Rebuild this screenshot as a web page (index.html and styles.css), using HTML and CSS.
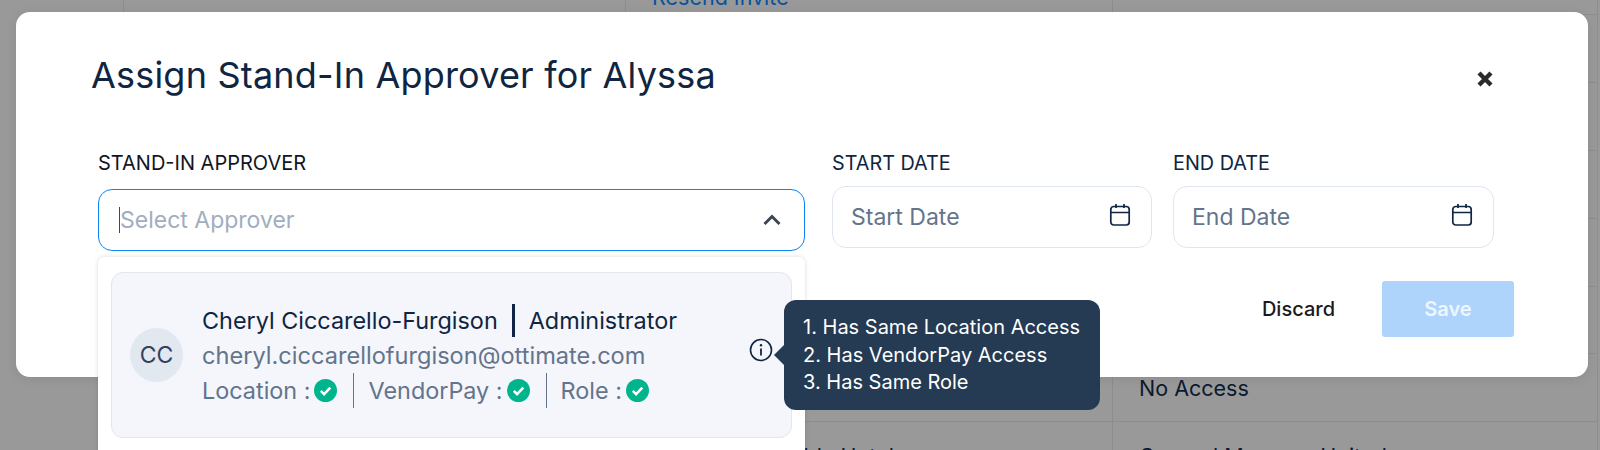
FILE: index.html
```html
<!DOCTYPE html>
<html lang="en">
<head>
  <meta charset="UTF-8">
  <title>Assign Stand-In Approver</title>
  <link rel="stylesheet" href="styles.css">
</head>
<body>
  <!-- table behind the modal -->
  <div class="user-table">
    <div class="table-row first-row">
      <div class="cell"></div>
      <div class="cell"><a class="link">Resend Invite</a></div>
      <div class="cell"></div>
    </div>
    <div class="table-row"><div class="cell"></div><div class="cell"></div><div class="cell"></div></div>
    <div class="table-row"><div class="cell"></div><div class="cell"></div><div class="cell"></div></div>
    <div class="table-row"><div class="cell"></div><div class="cell"></div><div class="cell"></div></div>
    <div class="table-row"><div class="cell"></div><div class="cell"></div><div class="cell"></div></div>
    <div class="table-row"><div class="cell"></div><div class="cell"></div><div class="cell"></div></div>
    <div class="table-row"><div class="cell"></div><div class="cell"></div><div class="cell">No Access</div></div>
    <div class="table-row"><div class="cell"></div><div class="cell">Accounts Payable Hotel</div><div class="cell">General Manager United</div></div>
  </div>

  <div class="modal">
    <div class="modal-header">
      <h2 class="modal-title">Assign Stand-In Approver for Alyssa</h2>
      <svg class="close-icon" width="18" height="18" viewBox="0 0 18 18">
        <path d="M3 3l12 12M15 3l-12 12" fill="none" stroke="#2b2b2b" stroke-width="4.4"/>
      </svg>
    </div>

    <div class="fields">
      <div class="field field-select">
        <label class="field-label">STAND-IN APPROVER</label>
        <div class="select-wrap">
          <div class="select-box">
            <span class="text-caret"></span>
            <span class="select-placeholder">Select Approver</span>
            <svg class="chevron" width="20" height="12" viewBox="0 0 20 12">
              <path d="M2.5 10L10 2.5L17.5 10" fill="none" stroke="#3b4754" stroke-width="3"/>
            </svg>
          </div>

          <div class="dropdown">
            <div class="option-card">
              <div class="avatar">CC</div>
              <div class="option-text">
                <div class="option-name">
                  <span>Cheryl Ciccarello-Furgison</span>
                  <span class="name-divider"></span>
                  <span>Administrator</span>
                </div>
                <div class="option-email">cheryl.ciccarellofurgison@ottimate.com</div>
                <div class="option-status">
                  <span class="status-item">Location :
                    <svg class="check" width="23" height="23" viewBox="0 0 23 23"><circle cx="11.5" cy="11.5" r="11.5" fill="#00b48d"/><path d="M6.8 11.8l3.3 3.3l6.2-6.4" fill="none" stroke="#fff" stroke-width="2.6"/></svg>
                  </span>
                  <span class="status-item">VendorPay :
                    <svg class="check" width="23" height="23" viewBox="0 0 23 23"><circle cx="11.5" cy="11.5" r="11.5" fill="#00b48d"/><path d="M6.8 11.8l3.3 3.3l6.2-6.4" fill="none" stroke="#fff" stroke-width="2.6"/></svg>
                  </span>
                  <span class="status-item">Role :
                    <svg class="check" width="23" height="23" viewBox="0 0 23 23"><circle cx="11.5" cy="11.5" r="11.5" fill="#00b48d"/><path d="M6.8 11.8l3.3 3.3l6.2-6.4" fill="none" stroke="#fff" stroke-width="2.6"/></svg>
                  </span>
                </div>
              </div>
              <div class="info">
                <svg width="24" height="24" viewBox="0 0 24 24">
                  <circle cx="12" cy="12" r="10.5" fill="none" stroke="#0f2542" stroke-width="1.6"/>
                  <path d="M12 10.5v7" stroke="#0f2542" stroke-width="1.8"/>
                  <circle cx="12" cy="7.2" r="1.2" fill="#0f2542"/>
                </svg>
                <div class="tooltip">
                  <div>1. Has Same Location Access</div>
                  <div>2. Has VendorPay Access</div>
                  <div>3. Has Same Role</div>
                </div>
              </div>
            </div>
          </div>
        </div>
      </div>

      <div class="field">
        <label class="field-label">START DATE</label>
        <div class="date-box">
          <span>Start Date</span>
          <svg class="calendar" width="22" height="24" viewBox="0 0 22 24"><rect x="1.8" y="3.5" width="18.4" height="18.5" rx="3" fill="none" stroke="#0f2542" stroke-width="1.7"/><path d="M1.8 9.5h18.4M7 1v4M15 1v4" fill="none" stroke="#0f2542" stroke-width="1.7"/></svg>
        </div>
      </div>

      <div class="field field-end">
        <label class="field-label">END DATE</label>
        <div class="date-box">
          <span>End Date</span>
          <svg class="calendar" width="22" height="24" viewBox="0 0 22 24"><rect x="1.8" y="3.5" width="18.4" height="18.5" rx="3" fill="none" stroke="#0f2542" stroke-width="1.7"/><path d="M1.8 9.5h18.4M7 1v4M15 1v4" fill="none" stroke="#0f2542" stroke-width="1.7"/></svg>
        </div>
      </div>
    </div>

    <div class="modal-footer">
      <button class="btn-discard">Discard</button>
      <button class="btn-save" disabled>Save</button>
    </div>
  </div>
</body>
</html>
```

FILE: styles.css
```css
html, body {
  margin: 0;
  height: 450px;
  overflow: hidden;
}
body {
  position: relative;
  font-family: 'Inter', sans-serif;
  background-color: #999;
  color: #0f2542;
}

/* table behind the modal */
.user-table {
  margin-left: 123px;
  width: 1475px;
  border-left: 1px solid #8d8d8d;
  border-right: 1px solid #8d8d8d;
  box-sizing: border-box;
  color: #0b1a30;
  font-size: 21.5px;
}
.table-row {
  display: grid;
  grid-template-columns: 501px 487px 1fr;
  height: 67.9px;
  box-sizing: border-box;
  border-bottom: 1px solid #8d8d8d;
}
.first-row {
  height: 15px;
  grid-template-rows: 14px;
}
.cell {
  display: flex;
  align-items: center;
  padding-left: 26px;
  border-left: 1px solid #8d8d8d;
  white-space: nowrap;
}
.cell:first-child {
  border-left: none;
}
.first-row .cell {
  align-items: flex-end;
  padding-bottom: 4px;
}
.link {
  color: #07539c;
}

/* modal */
.modal {
  position: absolute;
  top: 12px;
  left: 16px;
  width: 1572px;
  height: 365px;
  box-sizing: border-box;
  padding: 43px 74px 40px 76px;
  background-color: #fff;
  border-radius: 14px;
  box-shadow: 0 2px 12px rgba(0, 0, 0, 0.08);
}
.modal-header {
  display: flex;
  justify-content: space-between;
  align-items: center;
}
.modal-title {
  margin: 0 0 0 -1px;
  font-size: 36px;
  line-height: 40px;
  font-weight: 400;
  letter-spacing: 0.2px;
}
.close-icon {
  margin-top: 8px;
  margin-right: 20px;
}

.fields {
  display: flex;
  gap: 21px;
  margin-top: 57px;
  margin-left: 6px;
}
.field {
  width: 320px;
}
.field-end {
  width: 321px;
}
.field-select {
  width: 707px;
  margin-right: 6px;
}
.field-label {
  display: block;
  margin-bottom: 12px;
  font-size: 19.8px;
  line-height: 22px;
}
.field-select .field-label {
  margin-bottom: 15px;
  font-size: 20px;
  color: #11161f;
}

.select-wrap {
  position: relative;
}
.select-box {
  display: flex;
  align-items: center;
  height: 62px;
  box-sizing: border-box;
  padding: 0 22px 0 20px;
  border: 1px solid #0a84f0;
  border-radius: 14px;
}
.text-caret {
  width: 1px;
  height: 26px;
  background-color: #3a4a5a;
}
.select-placeholder {
  flex: 1;
  font-size: 23px;
  color: #a0aec0;
}
.date-box {
  display: flex;
  align-items: center;
  justify-content: space-between;
  height: 62px;
  box-sizing: border-box;
  padding: 0 20px 0 18px;
  border: 1px solid #dfe6f0;
  border-radius: 14px;
  font-size: 23px;
  color: #64748b;
}
.calendar {
  margin-bottom: 4px;
}

/* dropdown list */
.dropdown {
  position: absolute;
  top: 100%;
  left: 0;
  right: 0;
  margin-top: 6px;
  padding: 15px 13px 30px;
  background-color: #fff;
  border-radius: 6px;
  box-shadow: 0 0 4px rgba(0, 0, 0, 0.15);
}
.option-card {
  display: flex;
  align-items: center;
  height: 166px;
  box-sizing: border-box;
  padding: 0 18px;
  background-color: #f4f6fb;
  border: 1px solid #e3e6ed;
  border-radius: 12px;
}
.avatar {
  display: flex;
  align-items: center;
  justify-content: center;
  flex-shrink: 0;
  width: 53px;
  height: 54px;
  margin-right: 19px;
  border-radius: 50%;
  background-color: #e2e8f0;
  color: #33415c;
  font-size: 23px;
}
.option-text {
  flex: 1;
  font-size: 23.4px;
  line-height: 35px;
}
.option-name {
  display: flex;
  align-items: center;
}
.name-divider {
  width: 3px;
  height: 33px;
  margin: 0 14px 0 14px;
  background-color: #0f2542;
}
.option-email {
  font-size: 23.6px;
  color: #64748b;
}
.option-status {
  display: flex;
  color: #64748b;
}
.status-item {
  display: flex;
  align-items: center;
  gap: 4px;
  padding-right: 16px;
  margin-right: 14px;
  border-right: 1px solid #64748b;
}
.status-item:last-child {
  border-right: none;
}
.check {
  flex-shrink: 0;
}

.info {
  position: relative;
  display: flex;
  margin-bottom: 10px;
}
.tooltip {
  position: absolute;
  top: -38px;
  left: 35px;
  width: 316px;
  height: 110px;
  box-sizing: border-box;
  padding: 14px 19px;
  background-color: #243b53;
  border-radius: 12px;
  color: #fff;
  font-size: 20px;
  line-height: 27.5px;
  white-space: nowrap;
}
.tooltip::before {
  content: "";
  position: absolute;
  top: 45px;
  left: -10px;
  border-top: 10px solid transparent;
  border-bottom: 10px solid transparent;
  border-right: 10px solid #243b53;
}

.modal-footer {
  display: flex;
  justify-content: flex-end;
  align-items: center;
  margin-top: 30px;
}
.btn-discard {
  margin-right: 47px;
  padding: 0;
  background: none;
  border: none;
  font-family: inherit;
  font-size: 20px;
  font-weight: 500;
  color: #1a1a1a;
}
.btn-save {
  width: 132px;
  height: 56px;
  background-color: #aed4fb;
  border: none;
  border-radius: 3px;
  font-family: inherit;
  font-size: 20px;
  font-weight: 600;
  color: #eef6fe;
}
```
